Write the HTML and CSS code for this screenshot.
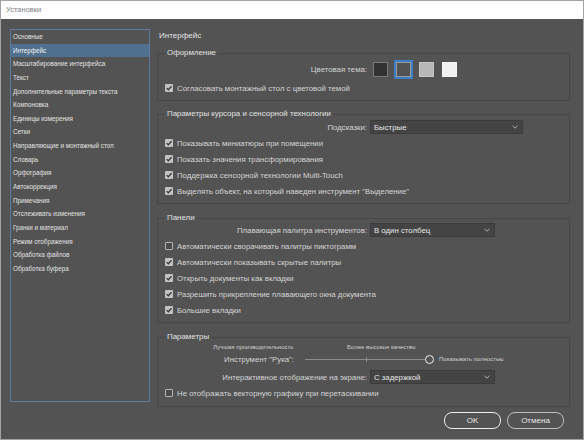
FILE: index.html
```html
<!DOCTYPE html>
<html lang="ru">
<head>
<meta charset="utf-8">
<title>Установки</title>
<link rel="stylesheet" href="styles.css">
</head>
<body>
<div class="window">
  <div class="titlebar">Установки</div>
  <div class="main">
    <ul class="nav">
      <li>Основные</li>
      <li class="active">Интерфейс</li>
      <li>Масштабирование интерфейса</li>
      <li>Текст</li>
      <li>Дополнительные параметры текста</li>
      <li>Компоновка</li>
      <li>Единицы измерения</li>
      <li>Сетки</li>
      <li>Направляющие и монтажный стол</li>
      <li>Словарь</li>
      <li>Орфография</li>
      <li>Автокоррекция</li>
      <li>Примечания</li>
      <li>Отслеживать изменения</li>
      <li>Гранки и материал</li>
      <li>Режим отображения</li>
      <li>Обработка файлов</li>
      <li>Обработка буфера</li>
    </ul>
    <div class="content">
      <div class="heading">Интерфейс</div>

      <fieldset class="group g1">
        <legend>Оформление</legend>
        <div class="field swatch-row">
          <span class="label">Цветовая тема:</span>
          <div class="swatches">
            <span class="swatch s-dark"></span>
            <span class="swatch s-mid selected"></span>
            <span class="swatch s-light"></span>
            <span class="swatch s-white"></span>
          </div>
        </div>
        <div class="check first"><span class="box on"><svg viewBox="0 0 8 8"><path d="M1.6 4.1 L3.3 5.8 L6.5 2.3"/></svg></span>Согласовать монтажный стол с цветовой темой</div>
      </fieldset>

      <fieldset class="group g2">
        <legend>Параметры курсора и сенсорной технологии</legend>
        <div class="field drop-row">
          <span class="label">Подсказки:</span>
          <div class="select wide"><span>Быстрые</span><svg viewBox="0 0 6 4"><path d="M0.5 0.8 L3 3.2 L5.5 0.8"/></svg></div>
        </div>
        <div class="checks">
          <div class="check"><span class="box on"><svg viewBox="0 0 8 8"><path d="M1.6 4.1 L3.3 5.8 L6.5 2.3"/></svg></span>Показывать миниатюры при помещении</div>
          <div class="check"><span class="box on"><svg viewBox="0 0 8 8"><path d="M1.6 4.1 L3.3 5.8 L6.5 2.3"/></svg></span>Показать значения трансформирования</div>
          <div class="check"><span class="box on"><svg viewBox="0 0 8 8"><path d="M1.6 4.1 L3.3 5.8 L6.5 2.3"/></svg></span>Поддержка сенсорной технологии Multi-Touch</div>
          <div class="check"><span class="box on"><svg viewBox="0 0 8 8"><path d="M1.6 4.1 L3.3 5.8 L6.5 2.3"/></svg></span>Выделять объект, на который наведен инструмент "Выделение"</div>
        </div>
      </fieldset>

      <fieldset class="group g3">
        <legend>Панели</legend>
        <div class="field drop-row">
          <span class="label">Плавающая палитра инструментов:</span>
          <div class="select"><span>В один столбец</span><svg viewBox="0 0 6 4"><path d="M0.5 0.8 L3 3.2 L5.5 0.8"/></svg></div>
        </div>
        <div class="checks">
          <div class="check"><span class="box off"></span>Автоматически сворачивать палитры пиктограмм</div>
          <div class="check"><span class="box on"><svg viewBox="0 0 8 8"><path d="M1.6 4.1 L3.3 5.8 L6.5 2.3"/></svg></span>Автоматически показывать скрытые палитры</div>
          <div class="check"><span class="box on"><svg viewBox="0 0 8 8"><path d="M1.6 4.1 L3.3 5.8 L6.5 2.3"/></svg></span>Открыть документы как вкладки</div>
          <div class="check"><span class="box on"><svg viewBox="0 0 8 8"><path d="M1.6 4.1 L3.3 5.8 L6.5 2.3"/></svg></span>Разрешить прикрепление плавающего окна документа</div>
          <div class="check"><span class="box on"><svg viewBox="0 0 8 8"><path d="M1.6 4.1 L3.3 5.8 L6.5 2.3"/></svg></span>Большие вкладки</div>
        </div>
      </fieldset>

      <fieldset class="group g4">
        <legend>Параметры</legend>
        <div class="hints">
          <span class="hint h1">Лучшая производительность</span>
          <span class="hint">Более высокое качество</span>
        </div>
        <div class="slider-row">
          <span class="label short">Инструмент "Рука":</span>
          <div class="slider"><span class="track"></span><span class="tick"></span></div>
          <span class="knob"></span>
          <span class="hint end">Показывать полностью</span>
        </div>
        <div class="field drop-row d4">
          <span class="label">Интерактивное отображение на экране:</span>
          <div class="select"><span>С задержкой</span><svg viewBox="0 0 6 4"><path d="M0.5 0.8 L3 3.2 L5.5 0.8"/></svg></div>
        </div>
        <div class="check first"><span class="box off"></span>Не отображать векторную графику при перетаскивании</div>
      </fieldset>

      <div class="buttons">
        <button class="btn primary">OK</button>
        <button class="btn">Отмена</button>
      </div>
    </div>
  </div>
</div>
</body>
</html>
```
FILE: styles.css
```css
html, body {
  margin: 0;
  padding: 0;
  background: #535353;
}
body {
  font-family: "Liberation Sans", Arial, sans-serif;
  font-size: 7.8px;
  color: #d4d4d4;
}
.window {
  width: 584px;
  height: 440px;
  box-sizing: border-box;
  border: 1px solid #a2a2a2;
  background: #535353;
  display: flex;
  flex-direction: column;
}
.titlebar {
  height: 18px;
  line-height: 18px;
  background: #ffffff;
  color: #7e7e7e;
  font-size: 7.5px;
  padding-left: 5px;
  flex: none;
}
.main {
  flex: 1;
  display: flex;
  padding: 10px 0 0 9px;
}
.nav {
  list-style: none;
  margin: 0;
  padding: 0;
  width: 140px;
  height: 373px;
  box-sizing: border-box;
  border: 1px solid #5d7c9d;
  flex: none;
}
.nav li {
  height: 13.65px;
  line-height: 13.65px;
  font-size: 6.3px;
  padding-left: 2px;
  color: #e2e2e2;
  white-space: nowrap;
}
.nav li.active {
  background: #50708f;
  color: #f2f2f2;
}
.content {
  margin-left: 7px;
  width: 413px;
  display: flex;
  flex-direction: column;
}
.heading {
  margin-top: 1px;
  padding-left: 2px;
  line-height: 12px;
  font-size: 8px;
  color: #e4e4e4;
}
.group {
  margin: 6px 0 0 0;
  padding: 0 0 4px 0;
  border: 1px solid #474747;
  min-width: 0;
}
.group legend {
  margin-left: 7px;
  padding: 0 2px;
  font-size: 7.9px;
  line-height: 10px;
  color: #e2e2e2;
}
.group.g2 { margin-top: 8px; padding-bottom: 4px; }
.group.g3 { margin-top: 9px; padding-bottom: 4px; }
.group.g4 { margin-top: 9px; padding-bottom: 5px; }

.field {
  display: flex;
  align-items: center;
}
.label {
  width: 209px;
  text-align: right;
  flex: none;
  white-space: nowrap;
}
.swatch-row {
  height: 20px;
  margin-top: 1px;
}
.swatches {
  display: flex;
  gap: 8px;
  margin-left: 6px;
}
.swatch {
  width: 15px;
  height: 15px;
  box-sizing: border-box;
  border: 1px solid #8a8a8a;
}
.s-dark { background: #323232; border-color: #7a7a7a; }
.s-mid { background: #535353; border-color: #9a9a9a; }
.s-light { background: #b8b8b8; border-color: #c6c6c6; }
.s-white { background: #f0f0f0; border-color: #f6f6f6; }
.swatch.selected {
  outline: 2px solid #3d7fc6;
  outline-offset: 0px;
}

.check {
  display: flex;
  align-items: center;
  height: 16px;
  padding-left: 7px;
  white-space: nowrap;
}
.check.first { margin-top: 1px; }
.checks { margin-top: 1px; }
.g3 .checks { margin-top: 1px; }
.box {
  width: 8px;
  height: 8px;
  box-sizing: border-box;
  border-radius: 1px;
  margin-right: 4px;
  flex: none;
  display: flex;
}
.box.on { background: #c2c2c2; }
.box.off { border: 1px solid #b4b4b4; background: #4a4a4a; }
.box svg { width: 8px; height: 8px; }
.box svg path {
  fill: none;
  stroke: #3a3a3a;
  stroke-width: 1.3;
}

.drop-row {
  height: 14px;
  margin-top: 1px;
}
.g3 .drop-row { margin-top: 0; }
.g4 .d4 { margin-top: 4px; }
.select {
  margin-left: 3px;
  width: 125px;
  height: 14px;
  box-sizing: border-box;
  background: #444444;
  border: 1px solid #3c3c3c;
  display: flex;
  align-items: center;
  justify-content: space-between;
  padding: 0 4px 0 3px;
  color: #e6e6e6;
}
.select.wide { width: 153px; }
.select svg { width: 6px; height: 4px; }
.select svg path {
  fill: none;
  stroke: #b0b0b0;
  stroke-width: 1;
}

.hints {
  height: 10px;
  display: flex;
  align-items: center;
  padding-left: 55px;
}
.hint {
  font-size: 6px;
  color: #d0d0d0;
  white-space: nowrap;
}
.hint.h1 { width: 134px; }
.slider-row {
  height: 14px;
  display: flex;
  align-items: center;
}
.label.short { width: 136px; }
.slider {
  position: relative;
  margin-left: 11px;
  width: 120px;
  height: 5px;
  display: flex;
  align-items: center;
}
.track {
  display: block;
  width: 100%;
  height: 1px;
  background: #8c8c8c;
}
.tick {
  position: absolute;
  left: 61px;
  top: 0;
  width: 1px;
  height: 5px;
  background: #8c8c8c;
}
.knob {
  width: 9px;
  height: 9px;
  box-sizing: border-box;
  border: 1.5px solid #f0f0f0;
  border-radius: 50%;
  flex: none;
}
.hint.end { margin-left: 5px; }

.buttons {
  margin-top: 5px;
  display: flex;
  justify-content: flex-end;
  gap: 6px;
  padding-right: 6px;
}
.btn {
  height: 17px;
  width: 57px;
  box-sizing: border-box;
  border: 1.5px solid #bdbdbd;
  border-radius: 8px;
  background: #535353;
  color: #e8e8e8;
  font-family: "Liberation Sans", Arial, sans-serif;
  font-size: 8px;
  padding: 0;
}
.btn.primary { border-color: #ececec; }
```
